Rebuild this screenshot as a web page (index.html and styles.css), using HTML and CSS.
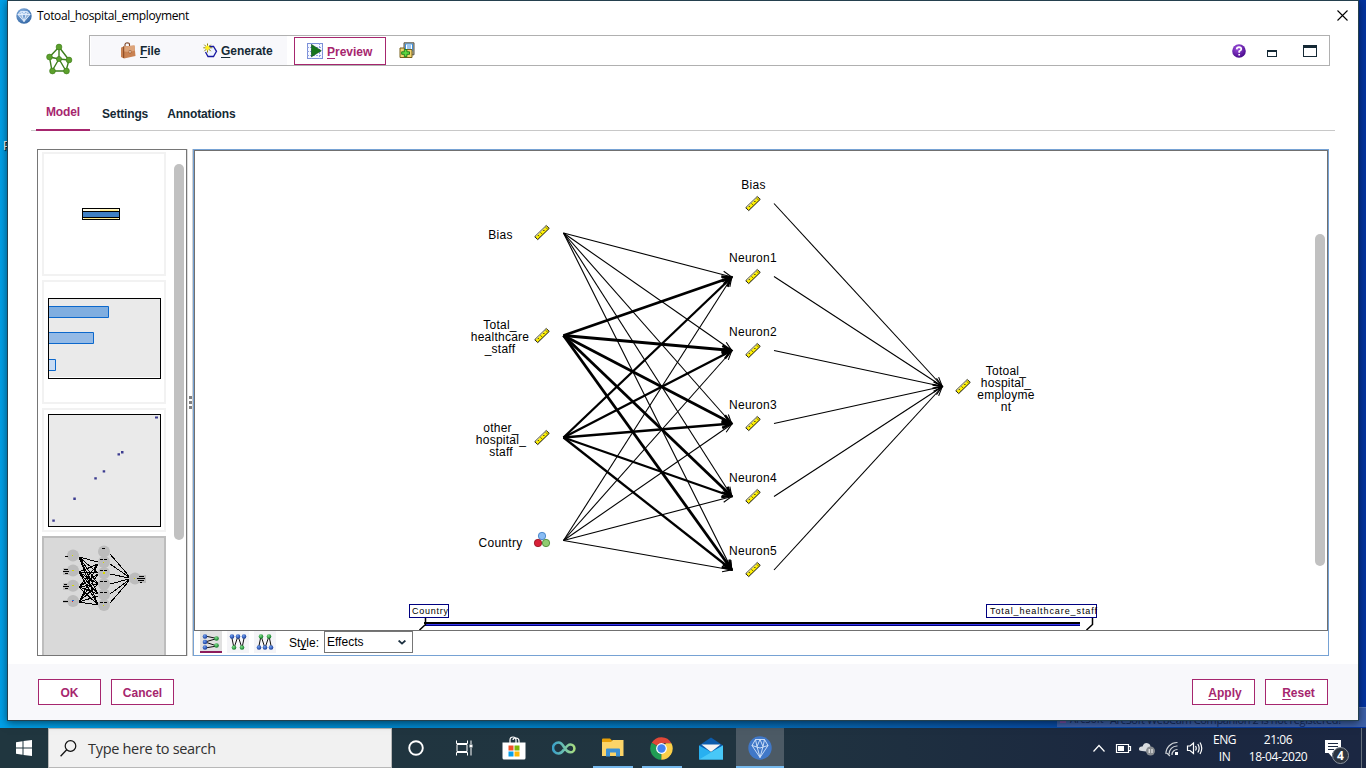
FILE: index.html
```html
<!DOCTYPE html>
<html lang="en">
<head>
<meta charset="utf-8">
<title>Totoal_hospital_employment</title>
<link rel="stylesheet" href="styles.css">
</head>
<body>
<svg width="0" height="0" class="defs">
  <defs>
    <radialGradient id="gem" cx=".4" cy=".3" r=".8"><stop offset="0" stop-color="#8fb8e6"/><stop offset="1" stop-color="#2a5f9e"/></radialGradient>
    <radialGradient id="purple" cx=".4" cy=".3" r=".8"><stop offset="0" stop-color="#a050e0"/><stop offset="1" stop-color="#3c0080"/></radialGradient>
    <radialGradient id="blueBall" cx=".4" cy=".35" r=".6"><stop offset="0" stop-color="#6d9ef0"/><stop offset="1" stop-color="#1c3f9c"/></radialGradient>
    <radialGradient id="greenBall" cx=".4" cy=".35" r=".6"><stop offset="0" stop-color="#7ee08a"/><stop offset="1" stop-color="#16802c"/></radialGradient>
    <linearGradient id="loop" x1="0" x2="1"><stop offset="0" stop-color="#3aa0c8"/><stop offset=".5" stop-color="#6cc0b0"/><stop offset="1" stop-color="#a8dc80"/></linearGradient>
    <marker id="head" markerUnits="userSpaceOnUse" markerWidth="14" markerHeight="14" refX="11.5" refY="6" orient="auto" overflow="visible"><path d="M2 2.500L11 6L2 9.500" fill="none" stroke="#000" stroke-width="1.1"/></marker>
    <marker id="headBold" markerUnits="userSpaceOnUse" markerWidth="16" markerHeight="16" refX="12.500" refY="6" orient="auto" overflow="visible"><path d="M2.500 2L11 6L2.500 10" fill="none" stroke="#000" stroke-width="2.4"/></marker>
    <symbol id="ruler" viewBox="0 0 16 16" overflow="visible"><path d="M.8 12.2L12.3 1L15.2 3.9L3.7 15.1Z" fill="#fff000" stroke="#111" stroke-width="1"/><path d="M1.800 11.900L12.200 1.800" stroke="#c8c8c0" stroke-width="1"/><path d="M4 10.700l1 1M6.700 8.100l1 1M9.400 5.500l1 1M12 3.100l1 1" stroke="#111" stroke-width="1"/></symbol>
  </defs>
</svg>

<div class="desktop">
  <span class="desk-label">P</span>
  <div class="toast"><i></i><span>ArcSoft</span><span class="toast-text">ArcSoft WebCam Companion 2 is not registered!</span></div>

  <div class="window">
    <div class="titlebar">
      <svg class="app-icon" width="16" height="16" viewBox="0 0 16 16"><circle cx="8" cy="8" r="7.7" fill="url(#gem)"/><path d="M4.7 3.6h6.6L14 6.5L8 13.5L2 6.5ZM2 6.5h12M4.7 3.6L6 6.5L8 13.5L10 6.5L11.3 3.6M6 6.5L8 3.6L10 6.5" fill="#ffffff55" stroke="#e8f2ff" stroke-width=".9"/></svg>
      <span class="title">Totoal_hospital_employment</span>
      <svg class="close" width="11" height="11" viewBox="0 0 11 11"><path d="M.5 .5L10.500 10.500M10.500 .5L.5 10.500" stroke="#000" stroke-width="1.1"/></svg>
    </div>

    <div class="header">
      <svg class="net-icon" width="28" height="32" viewBox="0 0 28 32"><g stroke="#3d7d1c" stroke-width="1.4" fill="none"><path d="M14 4V16M14 4L4.500 14L7 28H21L24 17L14 4M14 16L4.500 14M14 16L7 28M14 16L21 28M14 16L24 17"/></g><g fill="#5ca02c" stroke="#3a7a18" stroke-width=".6"><circle cx="14" cy="4" r="2.900"/><circle cx="4.500" cy="14" r="2.900"/><circle cx="24" cy="17" r="2.900"/><circle cx="14" cy="16" r="2.600"/><circle cx="7.500" cy="28" r="2.900"/><circle cx="21.500" cy="28" r="2.900"/></g></svg>
      <div class="toolbar">
        <div class="menus">
          <div class="menu file"><svg width="16" height="17" viewBox="0 0 16 17"><path d="M5 5V2.500Q5 1 7 .8Q9.500 .8 9.500 2.500V4" fill="none" stroke="#7a4020" stroke-width="1.1"/><path d="M1 6L3.500 4.500V15L1 14.500Z" fill="#8e4a26"/><path d="M3.500 4.500L14.500 3.500L15.500 14L4 16.500L1 15V6Z" fill="#c98252"/><path d="M3.500 4.500L14.500 3.500L15 8.500L10 10L4 9.500Z" fill="#dda47a"/><path d="M3.700 4.500V16" stroke="#84441e"/><path d="M9 8.500h2v2.500h-2z" fill="#f2dcc4" stroke="#84441e" stroke-width=".5"/></svg><span><u>F</u>ile</span></div>
          <div class="menu generate"><svg width="15" height="16" viewBox="0 0 15 16"><path d="M6 3.500H10.500L13.500 8.300L10.500 13.500H5L2.500 9" fill="#eef4ff" stroke="#1818a0" stroke-width="1.300"/><path d="M4.500 .5v9M.3 4.800h9M1.300 1.700l6.500 6.500M7.800 1.700l-6.500 6.500" stroke="#8a8010" stroke-width="1"/><path d="M4.500 2.500v5M2 4.800h5M3 3.200l3 3M6 3.200l-3 3" stroke="#fff020" stroke-width="1.200"/></svg><span><u>G</u>enerate</span></div>
        </div>
        <div class="preview"><svg width="16" height="16" viewBox="0 0 16 16"><rect x=".5" y=".5" width="15" height="15" fill="#f4f7ff" stroke="#7c90d8"/><path d="M4.500 0v16M12.500 0v16M0 4.500h16M0 8.500h16M0 12.500h16" stroke="#8ea0e0" stroke-dasharray="2 1"/><path d="M4.500 1.500L14.300 7.700L4.500 13.800Z" fill="#15751c" stroke="#0c4c14" stroke-width=".6"/></svg><span><u>P</u>review</span></div>
        <svg class="add-icon" width="16" height="17" viewBox="0 0 16 17"><path d="M5 .8h10v12H5z" fill="#b8b4a0" stroke="#57564c"/><path d="M6.500 2h7v7h-7z" fill="#fff" stroke="#3c90e0"/><path d="M8 4h4M8 6h4" stroke="#3c90e0"/><path d="M1 6h4l1 1.500h7V15.500H1z" fill="#f4d470" stroke="#76601c"/><path d="M5.300 7.500h2.600v2.300h2.600v2.500h-2.600v2.400H5.300v-2.400H2.700v-2.500h2.600z" fill="#60d840" stroke="#167818" stroke-width=".9"/></svg>
        <div class="tool-right">
          <svg class="help" width="14" height="14" viewBox="0 0 14 14"><circle cx="7" cy="7" r="6.800" fill="url(#purple)"/><path d="M4.700 5.300Q4.900 3.200 7.100 3.200Q9.400 3.300 9.300 5.200Q9.200 6.300 7.200 7.300V8.700M7.200 10v1.400" fill="none" stroke="#fff" stroke-width="1.700"/></svg>
          <i class="min"></i><i class="max"></i>
        </div>
      </div>
    </div>

    <div class="tabs"><span class="tab active">Model</span><span class="tab">Settings</span><span class="tab">Annotations</span></div>

    <div class="main">
      <div class="thumb-panel">
        <div class="thumbs">
          <svg class="thumb" viewBox="44 154 120 120"><rect x="82.500" y="208.500" width="37" height="11" fill="#fffce8" stroke="#000"/><path d="M100 209.500h18v1.500h-18zM84 218h34v1h-34z" fill="#ffec90"/><rect x="82.500" y="211.500" width="37" height="6" fill="#4080c4" stroke="#000"/></svg>
          <svg class="thumb" viewBox="44 282 120 120"><rect x="48.500" y="298.500" width="112" height="80" fill="#eaeaea" stroke="#000"/><path d="M49 377.500h111" stroke="#fff"/><g stroke="#0c68cc"><path d="M49 306.500H108.500V317.500H49" fill="#80aee0"/><path d="M49 332.500H93.500V343.500H49" fill="#94bae6"/><path d="M49 359.500H55.500V370.500H49" fill="#c8dcf4"/></g></svg>
          <svg class="thumb" viewBox="44 410 120 120"><rect x="48.500" y="414.500" width="112" height="112" fill="#eaeaea" stroke="#000"/><path d="M155 416.500h3v2h-3zM121 451h2.500v2.500h-2.500zM117.500 453.300h2.500v2.300h-2.500zM102.700 470.300h2.500v2.300h-2.500zM94.300 477.300h2.500v2.300h-2.500zM73.300 497.600h2.500v2.300h-2.500zM52.300 519.500h2.500v2.300h-2.500z" fill="#3c3c90"/></svg>
          <svg class="thumb selected" viewBox="44 538 120 120">
            <g fill="#bcbcbc"><circle cx="73" cy="555.500" r="6"/><circle cx="73" cy="570.500" r="6"/><circle cx="73" cy="585.700" r="6"/><circle cx="73" cy="601" r="6"/><circle cx="104" cy="551.500" r="6"/><circle cx="104" cy="562" r="6"/><circle cx="104" cy="573" r="6"/><circle cx="104" cy="584" r="6"/><circle cx="104" cy="594.500" r="6"/><circle cx="104" cy="605" r="6"/><circle cx="135" cy="578.500" r="6"/><path d="M63 568h8v7h-8zM63 583h8v7h-8zM63 600h8v3h-8zM137 575h9v8h-9z"/></g>
            <g stroke="#000" stroke-width="1" shape-rendering="crispEdges" fill="none">
              <path d="M79 557L98 562M79 557L98 573M79 557L98 584M79 557L98 594M79 557L98 605M79 572L98 564M79 572L98 573M79 572L98 584M79 572L98 594M79 572L98 605M79 587L98 564M79 587L98 574M79 587L98 584M79 587L98 594M79 587L98 605M79 602L98 564M79 602L98 574M79 602L98 584M79 602L98 596M79 602L98 605"/>
              <path d="M110 554L129 576M110 564L129 577M110 574L129 578M110 584L129 579M110 594L129 580M110 603L129 581"/>
              <path d="M65 556.500h3M64 569.500h4M63 571.500h6M65 573.500h3M64 584.500h3M63 586.500h6M65 588.500h3M63 601.500h5M102 548.500h3M100 559.500h3M104 559.500h3M100 570.500h3M104 570.500h3M100 581.500h3M104 581.500h3M100 592.500h3M104 592.500h3M100 602.500h3M104 602.500h3M139 576.500h5M137 578.500h8M138 580.500h6M140 582.500h2"/>
            </g>
            <path d="M72 555h1v1h-1zM72 570h2v1h-2zM72 585h2v1h-2zM103 562h1v1h-1zM103 572h2v2h-2zM103 605h1v1h-1zM134 578h1v1h-1z" fill="#d8d800"/><path d="M72 600h2v1h-2z" fill="#2070e0"/><path d="M72 601h1v1h-1z" fill="#e02020"/>
          </svg>
        </div>
        <i class="thumb-scroll"></i>
      </div>
      <div class="splitter"><i></i><i></i><i></i></div>
      <div class="view">
        <div class="canvas">
          <svg class="diagram" viewBox="195 151 1119 479">
            <g class="thin">
              <path d="M563.500 233L732 277"/><path d="M563.500 233L732 350.500"/><path d="M563.500 233L732 424"/><path d="M563.500 233L732 496.500"/><path d="M563.500 233L732 570"/>
              <path d="M563.500 540.500L732 277"/><path d="M563.500 540.500L732 350.500"/><path d="M563.500 540.500L732 424"/><path d="M563.500 540.500L732 496.500"/><path d="M563.500 540.500L732 570"/>
              <path d="M774 203.500L942.500 386.500"/><path d="M774 276.500L942.500 386.500"/><path d="M774 350.500L942.500 386.500"/><path d="M774 423.500L942.500 386.500"/><path d="M774 496.500L942.500 386.500"/><path d="M774 570L942.500 386.500"/>
            </g>
            <g class="bold">
              <path d="M563.500 335.500L732 277"/><path d="M563.500 335.500L732 350.500"/><path d="M563.500 335.500L732 423.500"/><path d="M563.500 335.500L732 496.500"/><path d="M563.500 335.500L732 570"/>
            </g>
            <g class="medium">
              <path d="M563.500 437.500L732 277"/><path d="M563.500 437.500L732 350.500"/><path d="M563.500 437.500L732 423.500"/><path d="M563.500 437.500L732 496.500"/><path d="M563.500 437.500L732 570"/>
            </g>
            <g>
              <use href="#ruler" x="534" y="224.500" width="16" height="16"/><use href="#ruler" x="534" y="327.500" width="16" height="16"/><use href="#ruler" x="534" y="429.500" width="16" height="16"/>
              <use href="#ruler" x="745" y="195.500" width="16" height="16"/><use href="#ruler" x="745" y="268.500" width="16" height="16"/><use href="#ruler" x="745" y="342.500" width="16" height="16"/><use href="#ruler" x="745" y="415.500" width="16" height="16"/><use href="#ruler" x="745" y="488.500" width="16" height="16"/><use href="#ruler" x="745" y="561.500" width="16" height="16"/>
              <use href="#ruler" x="955" y="378.500" width="16" height="16"/>
            </g>
            <circle cx="542" cy="536" r="3.700" fill="#88bcf4" stroke="#3878c0" stroke-width=".8"/><circle cx="538" cy="543" r="3.700" fill="#d82038" stroke="#901020" stroke-width=".8"/><circle cx="546" cy="543" r="3.700" fill="#90cc70" stroke="#488030" stroke-width=".8"/>
            <g class="node-label">
              <text x="500.500" y="239">Bias</text>
              <text x="500" y="329">Total_</text><text x="500" y="341">healthcare</text><text x="500" y="353">_staff</text>
              <text x="501" y="432">other_</text><text x="501" y="444">hospital_</text><text x="501" y="456">staff</text>
              <text x="500.500" y="547">Country</text>
              <text x="753.500" y="189">Bias</text><text x="753" y="262">Neuron1</text><text x="753" y="336">Neuron2</text><text x="753" y="409">Neuron3</text><text x="753" y="482">Neuron4</text><text x="753" y="555">Neuron5</text>
              <text x="1006" y="375">Totoal_</text><text x="1006" y="387">hospital_</text><text x="1006" y="399">employme</text><text x="1006" y="411">nt</text>
            </g>
            <g class="slider">
              <rect x="409.500" y="604.500" width="39" height="13"/><rect x="986.500" y="604.500" width="110" height="13"/>
              <text x="412" y="614" textLength="36">Country</text><text x="990" y="614" textLength="107">Total_healthcare_staff</text>
              <path class="track-top" d="M424 623h656"/><path class="track-edge" d="M425 625.500h655"/><path class="track" d="M425 624.500h655"/>
              <path class="tick" d="M425.500 618V624.500L419.500 630M1092.500 618V624.500L1086.500 630"/>
            </g>
          </svg>
          <i class="canvas-scroll"></i>
        </div>
        <div class="view-bar">
          <span class="layout on"><svg width="18" height="16" viewBox="0 0 18 16"><path d="M3 2L15 4.500L3 8L15 12L3 14" fill="none" stroke="#111"/><g fill="url(#blueBall)"><circle cx="3" cy="2.500" r="2.300"/><circle cx="3" cy="8" r="2.300"/><circle cx="3" cy="13.500" r="2.300"/></g><g fill="url(#greenBall)"><circle cx="14.500" cy="4.500" r="2.300"/><circle cx="14.500" cy="11.500" r="2.300"/></g></svg></span>
          <span class="layout"><svg width="18" height="16" viewBox="0 0 18 16"><path d="M2.500 2L5 14L9 2L13 14L15.500 2" fill="none" stroke="#111"/><g fill="url(#blueBall)"><circle cx="3" cy="2.500" r="2.300"/><circle cx="9" cy="2.500" r="2.300"/><circle cx="15" cy="2.500" r="2.300"/></g><g fill="url(#greenBall)"><circle cx="5" cy="13.500" r="2.300"/><circle cx="13" cy="13.500" r="2.300"/></g></svg></span>
          <span class="layout"><svg width="18" height="16" viewBox="0 0 18 16"><path d="M2.500 14L5 2L9 14L13 2L15.500 14" fill="none" stroke="#111"/><g fill="url(#blueBall)"><circle cx="3" cy="13.500" r="2.300"/><circle cx="9" cy="13.500" r="2.300"/><circle cx="15" cy="13.500" r="2.300"/></g><g fill="url(#greenBall)"><circle cx="5" cy="2.500" r="2.300"/><circle cx="13" cy="2.500" r="2.300"/></g></svg></span>
          <span class="style-label">St<u>y</u>le:</span>
          <div class="select"><span>Effects</span><svg width="8" height="5" viewBox="0 0 8 5"><path d="M.6 .6L4 3.600L7.400 .6" fill="none" stroke="#1c3040" stroke-width="1.900"/></svg></div>
        </div>
      </div>
    </div>

    <div class="footer">
      <span class="btn">OK</span><span class="btn">Cancel</span>
      <span class="btn apply"><span><u>A</u>pply</span></span><span class="btn"><span><u>R</u>eset</span></span>
    </div>
  </div>
</div>

<div class="taskbar">
  <div class="start"><svg width="16" height="16" viewBox="0 0 16 16"><path d="M0 2.200L6.500 1.200V7.500H0ZM7.500 1L16 0V7.500H7.500ZM0 8.500H6.500V14.800L0 13.800ZM7.500 8.500H16V16L7.500 14.900Z" fill="#fff"/></svg></div>
  <div class="search"><svg width="17" height="17" viewBox="0 0 17 17"><circle cx="10.500" cy="6" r="5.300" fill="none" stroke="#111" stroke-width="1.200"/><path d="M6.700 9.800L.6 16.300" stroke="#111" stroke-width="1.300"/></svg><span>Type here to search</span></div>
  <div class="apps">
    <span class="app left"><svg width="16" height="16" viewBox="0 0 16 16"><circle cx="8" cy="8" r="6.800" fill="none" stroke="#fff" stroke-width="1.900"/></svg></span>
    <span class="app left"><svg width="17" height="16" viewBox="0 0 17 16"><path d="M.5 .5V3.500H11.500V.5M.5 15.500V12.500H11.500V15.500M1 4.500H11V11.500H1ZM15 .5V4M15 8V15.500" fill="none" stroke="#fff"/><path d="M13.500 4.500h3v3h-3z" fill="#fff"/></svg></span>
    <span class="app left"><svg width="24" height="24" viewBox="0 0 24 24"><path d="M8 7V4Q8 1 11 1Q14 1 14 4V7M11 4Q11 2 14 2Q17 2 17 5V7" fill="none" stroke="#fff" stroke-width="1.200"/><path d="M.5 6.500H23.500V22Q23.500 23.500 22 23.500H2Q.5 23.500 .5 22Z" fill="#fff"/><path d="M6.500 9.500h5v5h-5z" fill="#f05028"/><path d="M12.500 9.500h5v5h-5z" fill="#80b808"/><path d="M6.500 15.500h5v5h-5z" fill="#08a0ec"/><path d="M12.500 15.500h5v5h-5z" fill="#fcb808"/></svg></span>
    <span class="app"><svg width="24" height="16" viewBox="0 0 24 16"><path d="M12 9.500Q9.500 13.500 6.500 13.500A5.500 5.500 0 0 1 6.500 2.500Q9.500 2.500 12 7Q15 12.300 18.500 12.300A3.900 3.900 0 0 0 18.500 4.500Q15.500 4.500 12.500 9.500" fill="none" stroke="url(#loop)" stroke-width="2.600"/></svg></span>
    <span class="app open"><svg width="22" height="20" viewBox="0 0 22 20"><path d="M0 1.500Q0 .5 1 .5H8L10 2.500H21V10H0Z" fill="#e8a008"/><path d="M0 4H9L11 2H21.500V18H0Z" fill="#fcd468"/><path d="M4 18.500V11.500Q4 10.500 5 10.500H17Q18 10.500 18 11.500V18.500H14V14.500H8V18.500Z" fill="#3c90d4"/></svg></span>
    <span class="app open"><svg width="23" height="23" viewBox="0 0 23 23"><path d="M11.500 11.500L1.700 5.800A11.300 11.300 0 0 1 21.400 6.200H11.500Z" fill="#e04838"/><path d="M11.500 11.500L11.300 22.800A11.300 11.300 0 0 1 1.700 5.800Z" fill="#209c54"/><path d="M11.500 11.500L16 6.200H21.400A11.300 11.300 0 0 1 11.300 22.800Z" fill="#fcd048"/><circle cx="11.500" cy="11.500" r="5.400" fill="#fff"/><circle cx="11.500" cy="11.500" r="4.200" fill="#4484f0"/></svg></span>
    <span class="app"><svg width="24" height="23" viewBox="0 0 24 23"><path d="M0 8.500L12 .5L24 8.500V14H0Z" fill="#0c5cac"/><path d="M2.500 7.500H21.500L12 15Z" fill="#f4f4f4"/><path d="M0 8.500L12 15L24 8.500V22.500H0Z" fill="#28b0f0"/><path d="M0 22.500L24 8.500V22.500Z" fill="#48c8f8"/></svg></span>
    <span class="app open current"><svg width="24" height="24" viewBox="0 0 24 24"><circle cx="12" cy="12" r="11.700" fill="#4078c8"/><path d="M7.500 3.500H16.500L20 9.500L12 21.500L4 9.500ZM4 9.500L12 12L20 9.500M7.500 3.500L9 10.500L12 21.500L15 10.500L16.500 3.500M9 10.500L12 3.500L15 10.500" fill="none" stroke="#d8e8fc" stroke-width=".9"/></svg></span>
  </div>
  <div class="tray">
    <svg width="111" height="18" viewBox="1092 739 111 18"><g fill="none" stroke="#fff" stroke-width="1.200"><path d="M1093.500 751.500L1099 745.500L1104.500 751.500"/><path d="M1116.500 744.500H1128.500V752.500H1116.500ZM1129 746.500H1130.500V750.500H1129"/><path d="M1166 754A11 11 0 0 1 1177.500 742.500M1169 754.500A8 8 0 0 1 1177.500 746M1172 755A5.300 5.300 0 0 1 1177.500 749.500M1167 753A10 10 0 0 0 1170 756" stroke="#d0d4d8"/><path d="M1187.500 746H1190L1193.500 743V753.500L1190 750.500H1187.500ZM1195.500 746Q1197 748.200 1195.500 750.500M1197.800 744Q1200.500 748.200 1197.800 752.500M1200 742.500Q1203.500 748.200 1200 754"/></g><path d="M1118 746h6v5h-6zM1175 752h3v3h-3z" fill="#fff"/><path d="M1142 751Q1138.500 751 1139 748.500Q1139.500 746 1142.500 746.500Q1144 742.500 1147.500 743.200Q1150.500 744 1150.500 747L1154 750L1150 752Z" fill="#d8dce0"/><circle cx="1150.500" cy="751" r="4.500" fill="#888c90"/><path d="M1149.200 749v4M1152 749v4" stroke="#fff"/></svg>
    <div class="lang"><span>ENG</span><span>IN</span></div>
    <div class="clock"><span>21:06</span><span>18-04-2020</span></div>
    <svg class="notify" width="25" height="24" viewBox="0 0 25 24"><path d="M0 0H16V13H7V17L3.500 13H0Z" fill="#fff"/><path d="M3 3.500H13M3 6.500H13M3 9.500H9" stroke="#1c2940"/><circle cx="15.500" cy="15.500" r="8" fill="#2c3440" stroke="#8a929c"/><text x="15.500" y="20">4</text></svg>
    <i class="peek"></i>
  </div>
</div>
</body>
</html>
```
FILE: styles.css
```css
* { box-sizing: border-box; }
body { margin: 0; width: 1366px; height: 768px; overflow: hidden; display: flex; flex-direction: column; font: 12px "Liberation Sans", Arial, sans-serif; color: #152935; }
svg { display: block; flex: none; }
i { display: block; }
.defs { position: absolute; }
u { text-decoration: underline; text-underline-offset: 2px; text-decoration-thickness: 1px; text-decoration-skip-ink: none; }

.desktop { position: relative; height: 728px; background: linear-gradient(90deg, #00a0e8 0, #0090d4 14%, #0084cc 38%, #0864b0 62%, #0848a4 80%, #0434a0 100%); }
.desk-label { position: absolute; left: 3px; top: 139px; color: #fff; text-shadow: 1px 1px 1px #000; }
.toast { position: absolute; left: 1057px; top: 707px; width: 309px; height: 20px; padding: 4px 0 0 3px; display: flex; background: #3c60a8; border-top: 1px solid #5878b8; color: #152c60; font: 12px/15px "Open Sans", sans-serif; white-space: nowrap; overflow: hidden; }
.toast i { width: 6px; height: 6px; margin: 5px 4px 0 0; background: #7850a8; }
.toast span { width: 40px; font-size: 10px; }
.toast .toast-text { width: auto; font-size: 11px; letter-spacing: -.35px; }

.window { position: absolute; left: 7px; top: 0; width: 1352px; height: 721px; background: #fff; border: 1px solid #24404e; box-shadow: 0 2px 8px #0008; display: flex; flex-direction: column; }
.titlebar { height: 29px; padding: 0 10px 0 8px; display: flex; align-items: center; }
.title { margin-left: 5px; flex: 1; color: #000; font: 12px "Open Sans", sans-serif; letter-spacing: -.35px; }
.header { height: 62px; padding: 5px 28px 0 37px; display: flex; align-items: flex-start; }
.net-icon { margin-top: 8px; }
.toolbar { margin-left: 16px; width: 1241px; height: 31px; border: 1px solid #b0b0b0; display: flex; align-items: center; font-weight: bold; }
.menus { width: 196px; height: 29px; margin-left: 1px; background: #f8f8fb; display: flex; align-items: center; padding-left: 29px; }
.menu { display: flex; align-items: center; letter-spacing: -.05px; }
.menu.file { gap: 4px; width: 83px; }
.menu.generate { gap: 3px; }
.preview { margin-left: 7px; width: 92px; height: 28px; margin-top: 1px; padding-left: 12px; border: 1px solid #a6266e; color: #a6266e; display: flex; align-items: center; gap: 4px; }
.preview span { margin-top: 1px; }
.add-icon { margin-left: 13px; }
.tool-right { margin-left: auto; display: flex; align-items: center; padding-right: 12px; }
.min { width: 10px; height: 7px; margin: 5px 26px 0 21px; border: 1px solid #152935; border-top-width: 2px; }
.max { width: 14px; height: 12px; border: 1px solid #152935; border-top-width: 3px; }

.tabs { height: 39px; margin: 0 23px 0 23px; padding-left: 5px; border-bottom: 1px solid #c8c8c8; display: flex; align-items: flex-start; font-weight: bold; letter-spacing: -.15px; }
.tab { padding: 14px 0 0 0; margin-right: 19px; line-height: 16px; }
.tab.active { width: 54px; height: 39px; margin-right: 12px; padding: 12px 0 0 10px; color: #a6266e; border-bottom: 2px solid #a6266e; }

.main { height: 507px; margin: 18px 29px 8px 29px; display: flex; }
.thumb-panel { width: 150px; border: 1px solid #767676; padding: 2px 2px 0 4px; display: flex; justify-content: space-between; overflow: hidden; }
.thumbs { width: 124px; display: flex; flex-direction: column; gap: 4px; }
.thumb { width: 124px; height: 124px; border: 2px solid #f2f2f2; }
.thumb.selected { background: #d9d9d9; border-color: #bdbdbd; }
.thumb-scroll { width: 10px; height: 376px; margin-top: 12px; border-radius: 5px; background: #c1c1c1; }
.splitter { width: 6px; border-left: 1px solid #dcdcdc; border-right: 1px solid #d0d0d0; padding-top: 247px; display: flex; flex-direction: column; align-items: center; gap: 2px; }
.splitter i { width: 3px; height: 3px; background: #808080; }
.view { flex: 1; border: 1px solid #76a2d4; }
.canvas { height: 481px; border: 1px solid #707070; display: flex; justify-content: space-between; }
.diagram { width: 1119px; height: 479px; }
.canvas-scroll { width: 10px; height: 332px; margin: 83px 2px 0 0; border-radius: 5px; background: #c1c1c1; }
.diagram path { fill: none; stroke: #000; }
.thin path { stroke-width: 1.1; marker-end: url(#head); }
.medium path { stroke-width: 2.3; marker-end: url(#headBold); }
.bold path { stroke-width: 2.8; marker-end: url(#headBold); }
.node-label { font-size: 12px; letter-spacing: .25px; text-anchor: middle; fill: #000; }
.slider rect { fill: #fff; stroke: #000080; }
.slider text { font-size: 9px; fill: #000; }
.slider .track-top { stroke-width: 2; }
.slider .track-edge { stroke: #000080; }
.slider .track { stroke: #3838f0; }
.slider .tick { stroke-width: 1.5; }
.view-bar { height: 24px; padding-left: 6px; display: flex; align-items: flex-start; color: #000; }
.layout { width: 22px; height: 22px; margin-right: 5px; padding: 3px 2px; background: #f4f4f7; }
.layout.on { background: #e0e0e0; border-bottom: 2px solid #8c1c5c; }
.style-label { margin: 5px 6px 0 8px; width: 29px; }
.select { width: 89px; height: 22px; border: 1px solid #767676; padding: 0 6px 0 2px; display: flex; align-items: center; justify-content: space-between; }

.footer { flex: 1; padding: 15px 30px 0 30px; background: #f8f8fb; display: flex; gap: 10px; }
.btn { width: 63px; height: 26px; border: 1px solid #a6266e; background: #fff; color: #a6266e; font-weight: bold; display: flex; align-items: center; justify-content: center; padding-top: 1px; }
.btn.apply { margin-left: auto; padding-left: 3px; }
.btn.apply + .btn { padding-left: 4px; }

.taskbar { height: 40px; display: flex; background: linear-gradient(90deg, #20363f, #203440 55%, #1b2840 82%, #1b2742); color: #fff; font-family: "Open Sans", sans-serif; }
.start { width: 48px; display: flex; align-items: center; justify-content: center; }
.search { width: 344px; padding-left: 11px; background: #f1f1f1; border: 1px solid #b8b8b8; display: flex; align-items: center; color: #303030; font-size: 14.5px; }
.search span { margin-left: 11px; letter-spacing: -.3px; }
.apps { display: flex; }
.app { width: 49px; display: flex; align-items: center; justify-content: center; }
.app.left { padding-right: 2px; }
.app.open { background: linear-gradient(#76b9ed, #76b9ed) center bottom / 40px 2px no-repeat; }
.app.current { width: 48px; margin-left: 1px; background: linear-gradient(#76b9ed, #76b9ed) center bottom / 48px 2px no-repeat, #4c5a65; }
.tray { margin-left: auto; display: flex; align-items: center; font-size: 12px; line-height: 17px; }
.lang, .clock { display: flex; flex-direction: column; align-items: center; letter-spacing: -.4px; }
.lang { width: 43px; }
.clock { width: 64px; }
.notify { margin: 7px 0 0 15px; }
.notify text { font: bold 12px "Open Sans", sans-serif; fill: #fff; text-anchor: middle; }
.peek { width: 1px; height: 40px; margin: 0 4px 0 11px; background: #66707c; }
```
